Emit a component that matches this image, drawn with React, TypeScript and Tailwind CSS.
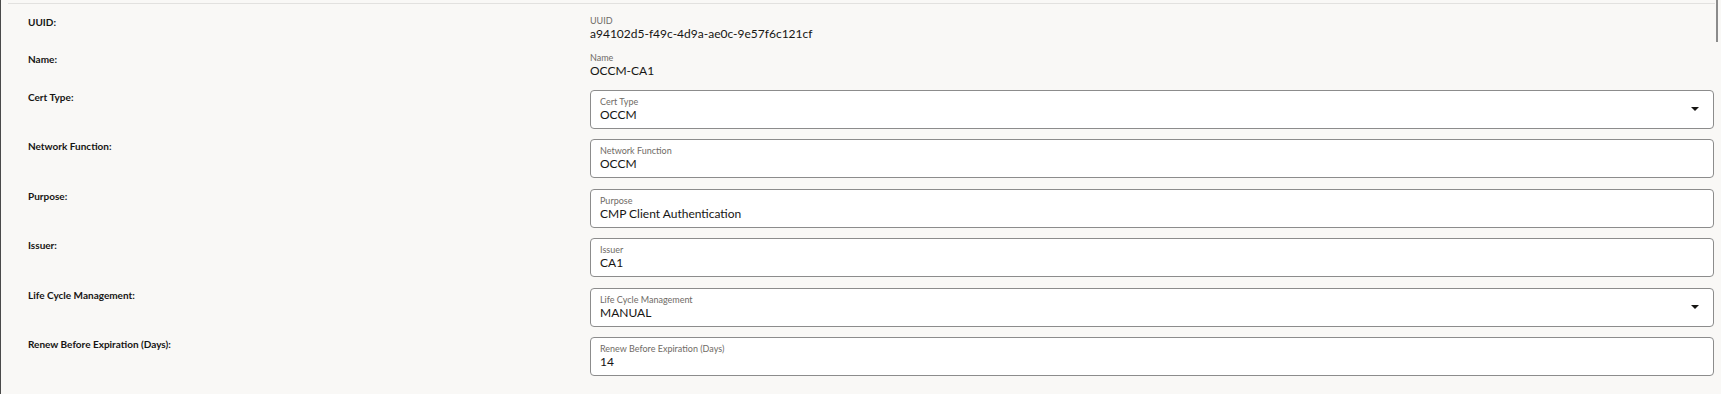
import React from 'react';

interface Field {
    label: string;
    value: string;
    select?: boolean;
}

const readOnlyFields: Field[] = [
    { label: 'UUID', value: 'a94102d5-f49c-4d9a-ae0c-9e57f6c121cf' },
    { label: 'Name', value: 'OCCM-CA1' },
];

const inputFields: Field[] = [
    { label: 'Cert Type', value: 'OCCM', select: true },
    { label: 'Network Function', value: 'OCCM' },
    { label: 'Purpose', value: 'CMP Client Authentication' },
    { label: 'Issuer', value: 'CA1' },
    { label: 'Life Cycle Management', value: 'MANUAL', select: true },
    { label: 'Renew Before Expiration (Days)', value: '14' },
];

const RowLabel: React.FC<{ text: string }> = ({ text }) => (
    <div className="pt-[1px] text-[10px] leading-[12px] font-bold text-[#161513]">{text}:</div>
);

const App: React.FC = () => {
    return (
        <div className="relative h-[394px] w-full overflow-hidden border-l border-[#4a4a4a] bg-[#f9f8f6] font-['Lato',sans-serif]">
            {/* top rule */}
            <div className="ml-[7px] mr-[6px] mt-[3px] border-t border-[#e2e1df]" />

            {/* scrollbar thumb */}
            <div className="absolute right-[3px] top-0 h-[42px] w-[2px] bg-[#8b8b8b]" />

            <div className="flex flex-col pl-[27px] pr-[7px] pt-[11px]">
                {/* Read-only rows */}
                <div className="flex flex-col gap-[11px]">
                    {readOnlyFields.map((f) => (
                        <div key={f.label} className="grid grid-cols-[562px_1fr]">
                            <RowLabel text={f.label} />
                            <div>
                                <div className="text-[9px] leading-[12px] text-[#6f6b66]">{f.label}</div>
                                <div className="text-[12px] leading-[14px] text-[#161513]">{f.value}</div>
                            </div>
                        </div>
                    ))}
                </div>

                {/* Editable rows */}
                <div className="mt-[12px] flex flex-col gap-[10.4px]">
                    {inputFields.map((f) => (
                        <div key={f.label} className="grid grid-cols-[562px_1fr]">
                            <RowLabel text={f.label} />
                            <div className="flex h-[39px] items-start justify-between rounded-[4px] border border-[#8c8c8c] bg-white px-[9px] pt-[5px]">
                                <div>
                                    <div className="text-[9px] leading-[12px] text-[#6f6b66]">{f.label}</div>
                                    <div className="text-[12px] leading-[14px] text-[#161513]">{f.value}</div>
                                </div>
                                {f.select && (
                                    <svg className="mt-[11px] mr-[5px] h-[4px] w-[8px]" viewBox="0 0 8 4">
                                        <path d="M0 0h8L4 4z" fill="#161513" />
                                    </svg>
                                )}
                            </div>
                        </div>
                    ))}
                </div>
            </div>
        </div>
    );
};

export default App;
